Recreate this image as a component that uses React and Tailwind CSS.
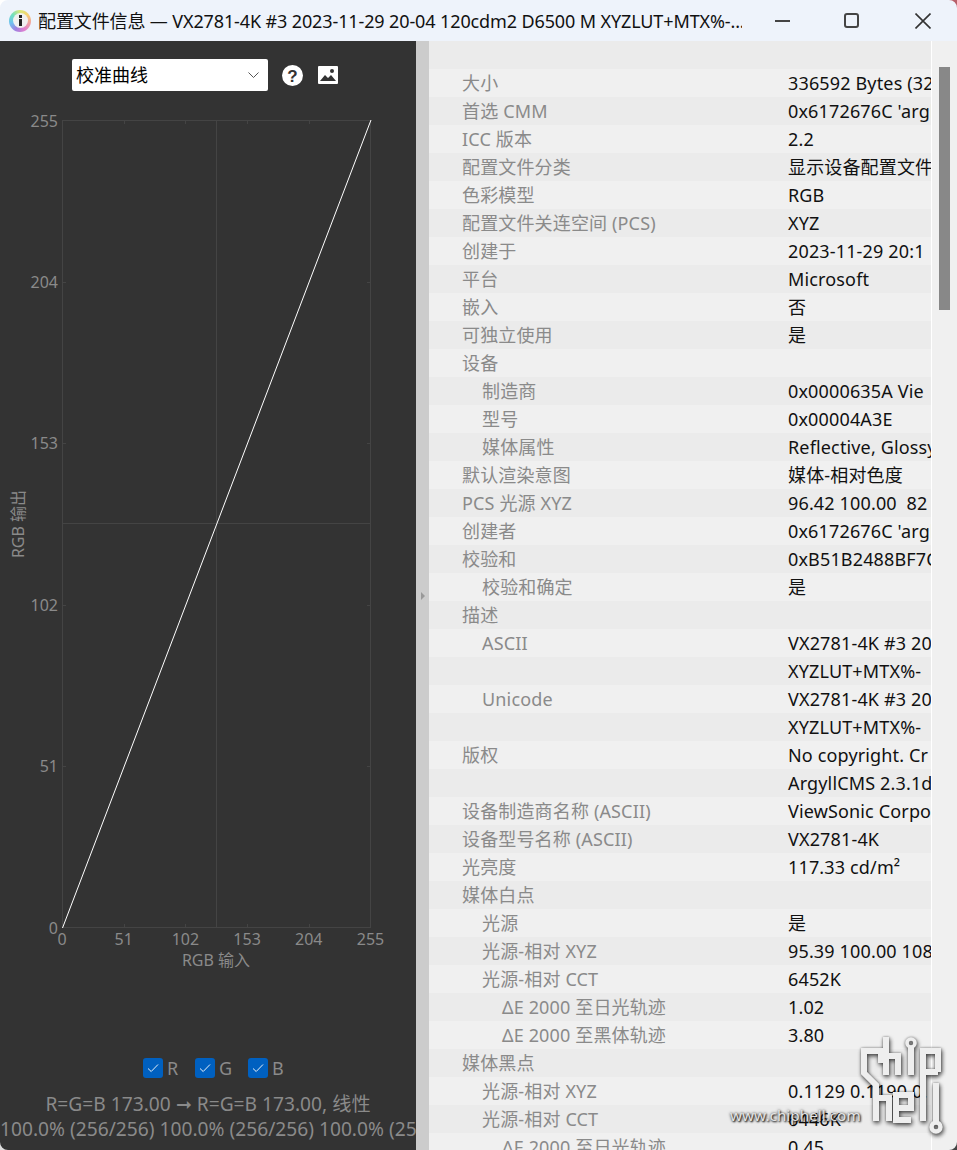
const SANS = "font-['Noto_Sans','Noto_Sans_CJK_SC',sans-serif]";

const rows = [
  ["", "", 0],
  ["大小", "336592 Bytes (328.7 KiB)", 0],
  ["首选 CMM", "0x6172676C 'argl' ArgyllCMS", 0],
  ["ICC 版本", "2.2", 0],
  ["配置文件分类", "显示设备配置文件", 0],
  ["色彩模型", "RGB", 0],
  ["配置文件关连空间 (PCS)", "XYZ", 0],
  ["创建于", "2023-11-29 20:1", 0],
  ["平台", "Microsoft", 0],
  ["嵌入", "否", 0],
  ["可独立使用", "是", 0],
  ["设备", "", 0],
  ["制造商", "0x0000635A Vie", 1],
  ["型号", "0x00004A3E", 1],
  ["媒体属性", "Reflective, Glossy, Positive", 1],
  ["默认渲染意图", "媒体-相对色度", 0],
  ["PCS 光源 XYZ", "96.42 100.00  82", 0],
  ["创建者", "0x6172676C 'argl' ArgyllCMS", 0],
  ["校验和", "0xB51B2488BF7C6A10", 0],
  ["校验和确定", "是", 1],
  ["描述", "", 0],
  ["ASCII", "VX2781-4K #3 2023-11-29", 1],
  ["", "XYZLUT+MTX%-", 1],
  ["Unicode", "VX2781-4K #3 2023-11-29", 1],
  ["", "XYZLUT+MTX%-", 1],
  ["版权", "No copyright. Cr", 0],
  ["", "ArgyllCMS 2.3.1d", 0],
  ["设备制造商名称 (ASCII)", "ViewSonic Corporation", 0],
  ["设备型号名称 (ASCII)", "VX2781-4K", 0],
  ["光亮度", "117.33 cd/m²", 0],
  ["媒体白点", "", 0],
  ["光源", "是", 1],
  ["光源-相对 XYZ", "95.39 100.00 108.58", 1],
  ["光源-相对 CCT", "6452K", 1],
  ["ΔE 2000 至日光轨迹", "1.02", 2],
  ["ΔE 2000 至黑体轨迹", "3.80", 2],
  ["媒体黑点", "", 0],
  ["光源-相对 XYZ", "0.1129 0.1190 0.", 1],
  ["光源-相对 CCT", "6446K", 1],
  ["ΔE 2000 至日光轨迹", "0.45", 2],
];

const indents = ["pl-[33px]", "pl-[53px]", "pl-[73px]"];

function Chart() {
  const ticks = [0, 51, 102, 153, 204, 255];
  const x = (v) => 62 + (v / 255) * 308.5;
  const y = (v) => 927.5 - (v / 255) * 807;
  return (
    <svg width="416" height="900" viewBox="0 100 416 900" className="block shrink-0">
      <g stroke="#444444" strokeWidth="1" fill="none" shapeRendering="crispEdges">
        <rect x="62.5" y="120.5" width="308" height="807" />
        <line x1="216.5" y1="120" x2="216.5" y2="928" />
        <line x1="62" y1="523.5" x2="371" y2="523.5" />
        {ticks.slice(1, 5).map((t) => (
          <g key={t}>
            <line x1={Math.round(x(t)) + 0.5} y1="120" x2={Math.round(x(t)) + 0.5} y2="124" />
            <line x1={Math.round(x(t)) + 0.5} y1="928" x2={Math.round(x(t)) + 0.5} y2="924" />
            <line x1="62" y1={Math.round(y(t)) + 0.5} x2="66" y2={Math.round(y(t)) + 0.5} />
            <line x1="371" y1={Math.round(y(t)) + 0.5} x2="367" y2={Math.round(y(t)) + 0.5} />
          </g>
        ))}
      </g>
      <line x1="62.5" y1="928" x2="371" y2="120" stroke="#ffffff" strokeWidth="1" />
      <g fill="#8a8a8a" fontSize="16" fontFamily="'Noto Sans','Noto Sans CJK SC',sans-serif">
        {ticks.map((t) => (
          <text key={`y${t}`} x="58" y={y(t) + 6} textAnchor="end">{t}</text>
        ))}
        {ticks.map((t) => (
          <text key={`x${t}`} x={x(t)} y="945" textAnchor="middle">{t}</text>
        ))}
        <text x="216" y="966" textAnchor="middle">RGB 输入</text>
        <text transform="translate(24 524) rotate(-90)" textAnchor="middle">RGB 输出</text>
      </g>
    </svg>
  );
}

function Check({ label, className }) {
  return (
    <div className={`flex items-center gap-[4px] ${className}`}>
      <span className="w-5 h-5 rounded-[3px] bg-[#0060c0] flex items-center justify-center">
        <svg width="12" height="10" viewBox="0 0 12 10" fill="none" stroke="#fff" strokeWidth="0.9"><path d="M1 5.5 4.2 8.5 11 1.5" /></svg>
      </span>
      <span className="text-[18px] leading-5 text-[#8a8a8a]">{label}</span>
    </div>
  );
}

function Watermark() {
  return (
    <>
      <svg width="95" height="110" viewBox="855 1030 95 110" className="absolute left-[855px] top-[1030px] pointer-events-none" style={{ filter: "drop-shadow(1px 2px 2px rgba(0,0,0,0.6)) drop-shadow(0 0 1px rgba(0,0,0,0.4))" }} fill="none" stroke="#eeeeee" strokeWidth="6" strokeLinejoin="miter">
        <path d="M881 1063V1051H864V1073L876 1085V1121" />
        <path d="M886 1037V1075M886 1056H898V1075" />
        <circle cx="911" cy="1043" r="4" strokeWidth="3.6" />
        <path d="M911 1047V1075" />
        <path d="M938 1072H923V1051H938V1072M923 1072V1121" />
        <path d="M876 1098H889V1121" />
        <path d="M911 1120H896V1095H911V1108H896" />
        <path d="M936 1083V1122" />
        <circle cx="936" cy="1127" r="4.5" strokeWidth="4.4" />
      </svg>
      <div className="absolute left-[730px] top-[1105px] text-[15.3px] leading-5 text-[#e4e4e4] whitespace-nowrap pointer-events-none [text-shadow:1px_1px_2px_#000,0_0_3px_rgba(0,0,0,0.7)]">www.chiphell.com</div>
    </>
  );
}

function Corner({ className, color }) {
  return (
    <svg width="8" height="8" viewBox="0 0 8 8" className={`absolute ${className}`}>
      <path d="M0 0H8A8 8 0 0 0 0 8Z" fill={color} />
    </svg>
  );
}

export default function App() {
  return (
    <div className={`relative w-[957px] h-[1150px] overflow-hidden flex flex-col bg-[#eef3fb] ${SANS}`}>
      <header className="h-[41px] shrink-0 bg-[#eef3fb] flex items-center pl-[9px]">
        <div className="w-[22px] h-[22px] shrink-0 rounded-full bg-[conic-gradient(#d8e878,#f6d070,#f0a0a0,#e080d0,#a080e0,#70c0f0,#70e0c0,#d8e878)] flex items-center justify-center">
          <div className="w-[15px] h-[15px] rounded-full bg-[#f0f0f0] flex flex-col items-center justify-center gap-[1px]">
            <span className="w-[3px] h-[3px] bg-[#222]" />
            <span className="w-[3px] h-[7px] bg-[#222]" />
          </div>
        </div>
        <div className="ml-[7px] w-[704px] shrink-0 overflow-hidden whitespace-nowrap text-[18px] tracking-[-0.12px] leading-[24px] text-[#111]">配置文件信息 — VX2781-4K #3 2023-11-29 20-04 120cdm2 D6500 M XYZLUT+MTX%-...</div>
        <div className="ml-[33px] w-[15px] h-[2px] shrink-0 bg-[#444]" />
        <div className="ml-[54px] w-[15px] h-[15px] shrink-0 border-2 border-[#444] rounded-[3px]" />
        <svg width="16" height="16" viewBox="0 0 16 16" className="ml-[56px] shrink-0" stroke="#333" strokeWidth="1.6"><path d="M.5.5l15 15M15.5.5l-15 15" /></svg>
      </header>
      <div className="flex-1 flex min-h-0">
        <aside className="w-[416px] shrink-0 bg-[#333333] flex flex-col overflow-hidden">
          <div className="h-[41px] mt-[18px] flex items-start pl-[72px] shrink-0">
            <div className="w-[196px] h-[32px] bg-white rounded-[2px] flex items-center pl-[4px] pr-[9px] justify-between text-[18px] text-black leading-6">
              <span>校准曲线</span>
              <svg width="11" height="7" viewBox="0 0 11 7" fill="none" stroke="#555" strokeWidth="1"><path d="M.5.5l5 5 5-5" /></svg>
            </div>
            <svg width="21" height="21" viewBox="0 0 21 21" className="ml-[14px] mt-[6px]">
              <circle cx="10.5" cy="10.5" r="10.5" fill="#fff" />
              <text x="10.5" y="16.5" textAnchor="middle" fontSize="17" fontWeight="700" fill="#333" fontFamily="'Liberation Sans',sans-serif">?</text>
            </svg>
            <svg width="20" height="18" viewBox="0 0 20 18" className="ml-[15px] mt-[7px]">
              <rect width="20" height="18" rx="1" fill="#fff" />
              <path d="M2 15l5-6 3 3 3-3 5 6z" fill="#333" />
              <circle cx="14" cy="5" r="2" fill="#333" />
            </svg>
          </div>
          <Chart />
          <div className="flex pl-[143px] mt-[58px] h-[20px] shrink-0">
            <Check label="R" className="w-[52px]" />
            <Check label="G" className="w-[53px]" />
            <Check label="B" />
          </div>
          <div className="mt-[13px] text-center text-[19.2px] leading-[26px] text-[#8a8a8a] whitespace-nowrap">R=G=B 173.00 ➞ R=G=B 173.00, 线性</div>
          <div className="text-[19.2px] leading-[24px] text-[#8a8a8a] whitespace-nowrap">100.0% (256/256) 100.0% (256/256) 100.0% (256/256)</div>
        </aside>
        <div className="w-[13px] shrink-0 bg-[#cccccc] flex items-center justify-center">
          <span className="ml-[1px] w-0 h-0 border-y-[4px] border-y-transparent border-l-[4px] border-l-[#999]" />
        </div>
        <main className="w-[502px] shrink-0 overflow-hidden">
          {rows.map(([k, v, lvl], i) => (
            <div key={i} className={`h-[28px] flex text-[18px] leading-[28px] tracking-[0.15px] whitespace-pre ${i % 2 ? "bg-[#f0f0f0]" : "bg-[#ebebeb]"}`}>
              <div className={`w-[359px] shrink-0 text-[#8a8a8a] ${indents[lvl]}`}>{k}</div>
              <div className="text-[#111]">{v}</div>
            </div>
          ))}
        </main>
        <div className="flex-1 bg-[#f0f0f0] border-l border-white flex justify-center">
          <div className="mt-[26px] w-[11px] h-[243px] bg-[#888888]" />
        </div>
      </div>
      <Watermark />
      <Corner className="left-0 top-0" color="#ffffff" />
      <Corner className="right-0 top-0 rotate-90" color="#b8606a" />
      <Corner className="left-0 bottom-0 -rotate-90" color="#dddddd" />
      <Corner className="right-0 bottom-0 rotate-180" color="#444444" />
    </div>
  );
}
